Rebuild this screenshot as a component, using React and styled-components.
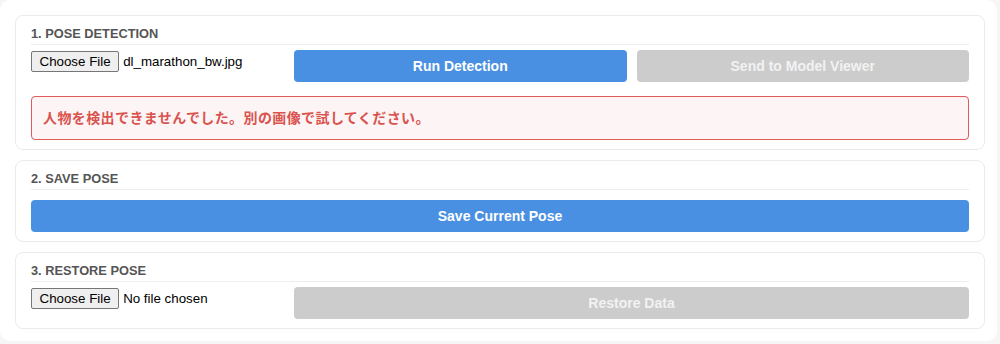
import React, { useEffect, useRef } from 'react';
import styled, { createGlobalStyle } from 'styled-components';

const GlobalStyle = createGlobalStyle`
  html, body {
    margin: 0;
    padding: 0;
    background: #f6f6f6;
    font-family: "Liberation Sans", Arial, "Noto Sans CJK JP", sans-serif;
  }
`;

const Panel = styled.div`
  width: 997px;
  height: 341px;
  box-sizing: border-box;
  background: #fff;
  border-radius: 10px;
  padding: 15px 12px 0 15px;
  display: flex;
  flex-direction: column;
  gap: 10px;
`;

const Card = styled.section`
  width: 970px;
  box-sizing: border-box;
  border: 1px solid #ebebeb;
  border-radius: 8px;
  padding: 10px 15px 9px 15px;
`;

const Title = styled.h3`
  margin: 0;
  height: 16px;
  font-size: 12.8px;
  line-height: 16px;
  font-weight: bold;
  color: #555;
  padding-bottom: 2px;
  border-bottom: 1px solid #eeeeee;
`;

const Row = styled.div`
  display: flex;
  align-items: flex-start;
  gap: 10px;
  margin-top: ${(p) => p.$top || 5}px;
`;

const FileInput = styled.input`
  width: 253px;
  height: 21px;
  margin: 1px 0 0;
  font-family: "Liberation Sans", Arial, sans-serif;
  font-size: 13.33px;
  color: #000;

  &::file-selector-button {
    font-family: "Liberation Sans", Arial, sans-serif;
    font-size: 13.33px;
    height: 21px;
    padding: 1px 7.5px;
    margin-right: 4px;
    background: #efefef;
    border: 1px solid #767676;
    border-radius: 2px;
    color: #000;
  }
`;

const Button = styled.button`
  flex: 1;
  height: 32px;
  border: none;
  border-radius: 4px;
  background: ${(p) => (p.disabled ? '#cccccc' : '#4a90e2')};
  color: ${(p) => (p.disabled ? '#f2f2f2' : '#fff')};
  font-family: "Liberation Sans", Arial, sans-serif;
  font-size: 14px;
  font-weight: bold;
  cursor: ${(p) => (p.disabled ? 'default' : 'pointer')};
`;

const ErrorBox = styled.div`
  margin-top: 14px;
  height: 44px;
  box-sizing: border-box;
  border: 1px solid #e05a5a;
  border-radius: 4px;
  background: #fdf5f5;
  color: #d9534f;
  padding: 11px 11px;
  font-family: "Liberation Sans", "Noto Sans CJK JP", sans-serif;
  font-size: 14px;
  line-height: 20px;
  font-weight: bold;
  letter-spacing: 0.4px;
`;

function PresetFile({ name }) {
  const ref = useRef(null);

  useEffect(() => {
    if (!name || !ref.current) return;
    try {
      const dt = new DataTransfer();
      dt.items.add(new File([''], name, { type: 'image/jpeg' }));
      ref.current.files = dt.files;
    } catch (e) {
      // leave the input empty if the browser refuses
    }
  }, [name]);

  return <FileInput type="file" ref={ref} />;
}

export default function App() {
  return (
    <>
      <GlobalStyle />
      <Panel>
        <Card>
          <Title>1. POSE DETECTION</Title>
          <Row>
            <PresetFile name="dl_marathon_bw.jpg" />
            <Button>Run Detection</Button>
            <Button disabled>Send to Model Viewer</Button>
          </Row>
          <ErrorBox>人物を検出できませんでした。別の画像で試してください。</ErrorBox>
        </Card>
        <Card>
          <Title>2. SAVE POSE</Title>
          <Row $top={10}>
            <Button>Save Current Pose</Button>
          </Row>
        </Card>
        <Card>
          <Title>3. RESTORE POSE</Title>
          <Row>
            <PresetFile />
            <Button disabled>Restore Data</Button>
          </Row>
        </Card>
      </Panel>
    </>
  );
}
